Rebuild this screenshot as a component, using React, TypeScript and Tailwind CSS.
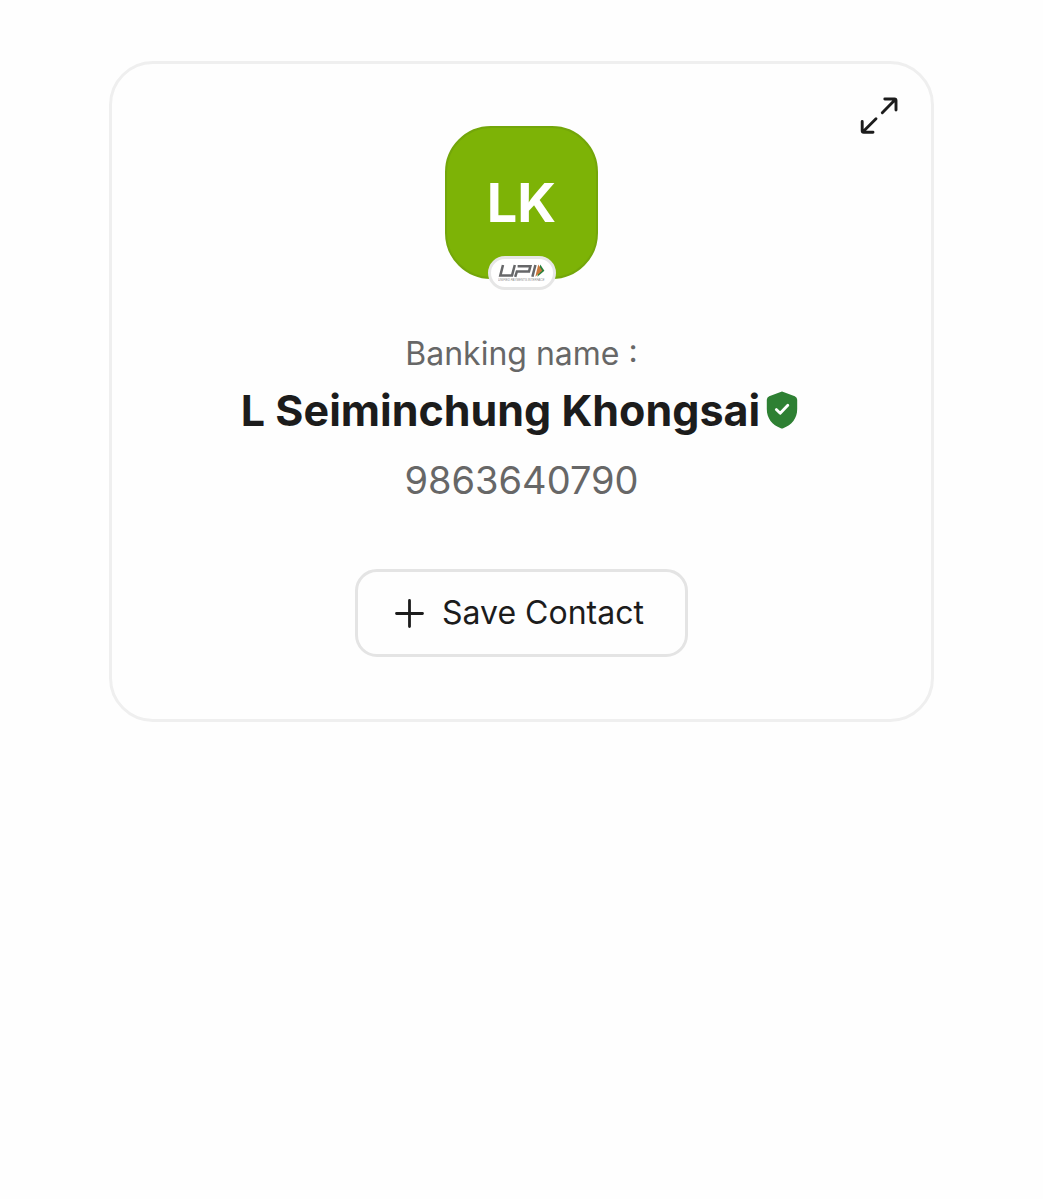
const contact = {
  initials: 'LK',
  name: 'L Seiminchung Khongsai',
  phone: '9863640790',
}

function ExpandIcon() {
  return (
    <svg width="38" height="38" viewBox="0 0 38 38" fill="none" stroke="#1c1c1c" strokeWidth="2.9" strokeLinecap="round" strokeLinejoin="round">
      <path d="M22.3 15.7L35.3 2.5M24.8 2H34.5Q36 2 36 3.5V13" />
      <path d="M16 21.8L3 34.8M2.2 24.5v9.3q0 1.5 1.5 1.5H13" />
    </svg>
  )
}

function ShieldCheck() {
  return (
    <svg width="32" height="38" viewBox="0 0 32 38" className="shrink-0" role="img" aria-label="Verified">
      <path
        d="M14.6 0.9Q16 0.3 17.4 0.9L28.8 5.2Q31.2 6.2 31.2 8.8V18C31.2 27.5 25.8 33.8 17.2 37.3Q16 37.8 14.8 37.3C6.2 33.8 0.8 27.5 0.8 18V8.8Q0.8 6.2 3.2 5.2Z"
        fill="#2e8033"
      />
      <path d="M10.3 18.6L14.2 22.3L21.8 14.2" fill="none" stroke="#fff" strokeWidth="2.8" strokeLinecap="round" strokeLinejoin="round" />
    </svg>
  )
}

function UpiLogo() {
  return (
    <svg width="48" height="20" viewBox="0 0 48 20" role="img" aria-label="UPI">
      <g fill="none" stroke="#666769" strokeWidth="2.5">
        <path d="M5 2L2.3 12.6H14L16.8 2" />
        <path d="M17.2 13.8L18.9 8.4H31L32.4 3.2H19.6" />
        <path d="M37.4 2L34.4 13.8" />
      </g>
      <path d="M42.3 1.6L46.4 7.7L39.3 13.8Z" fill="#27803b" />
      <path d="M40.3 1.6L44.2 7.7L37.3 13.8Z" fill="#c9783c" />
      <text x="0" y="18" fontSize="3" fontFamily="Liberation Sans" fontStyle="italic" fill="#8a8a8a">
        UNIFIED PAYMENTS INTERFACE
      </text>
    </svg>
  )
}

export default function App() {
  return (
    <main className="min-h-screen bg-[#fefefe] px-[109px] pt-[61px] font-['Inter',sans-serif] text-[#1c1c1c]">
      <section className="relative flex flex-col items-center rounded-[44px] border-3 border-[#efefef] py-[62px]">
        <button type="button" aria-label="Expand" className="absolute top-[33px] right-[33px]">
          <ExpandIcon />
        </button>

        {/* Avatar with the payment badge on its lower edge */}
        <div className="relative flex size-[153px] items-center justify-center rounded-[46px] border-2 border-[#73a60a] bg-[#7db306]">
          <span className="text-[54px] font-bold text-white">{contact.initials}</span>
          <div className="absolute -bottom-[13px] left-1/2 flex h-[34px] w-[68px] -translate-x-1/2 items-center justify-center rounded-full border-3 border-[#e6e6e6] bg-white">
            <UpiLogo />
          </div>
        </div>

        <p className="mt-[55px] text-[32px] leading-10 text-[#676767] [font-feature-settings:'case']">Banking name :</p>
        <h1 className="mt-2 flex items-center gap-[6px] pr-1 text-[43px] leading-14 font-bold">
          {contact.name}
          <ShieldCheck />
        </h1>
        <p className="mt-[18px] text-[38px] leading-12 text-[#676767]">{contact.phone}</p>

        <button type="button" className="mt-[65px] flex h-[88px] items-center gap-[18px] rounded-[22px] border-3 border-[#e4e4e4] pr-[41px] pl-[37px] text-[32px] leading-10">
          <svg width="29" height="29" viewBox="0 0 29 29" fill="none" stroke="#1c1c1c" strokeWidth="2.8" strokeLinecap="round">
            <path d="M14.5 1.5v26M1.5 14.5h26" />
          </svg>
          Save Contact
        </button>
      </section>
    </main>
  )
}
